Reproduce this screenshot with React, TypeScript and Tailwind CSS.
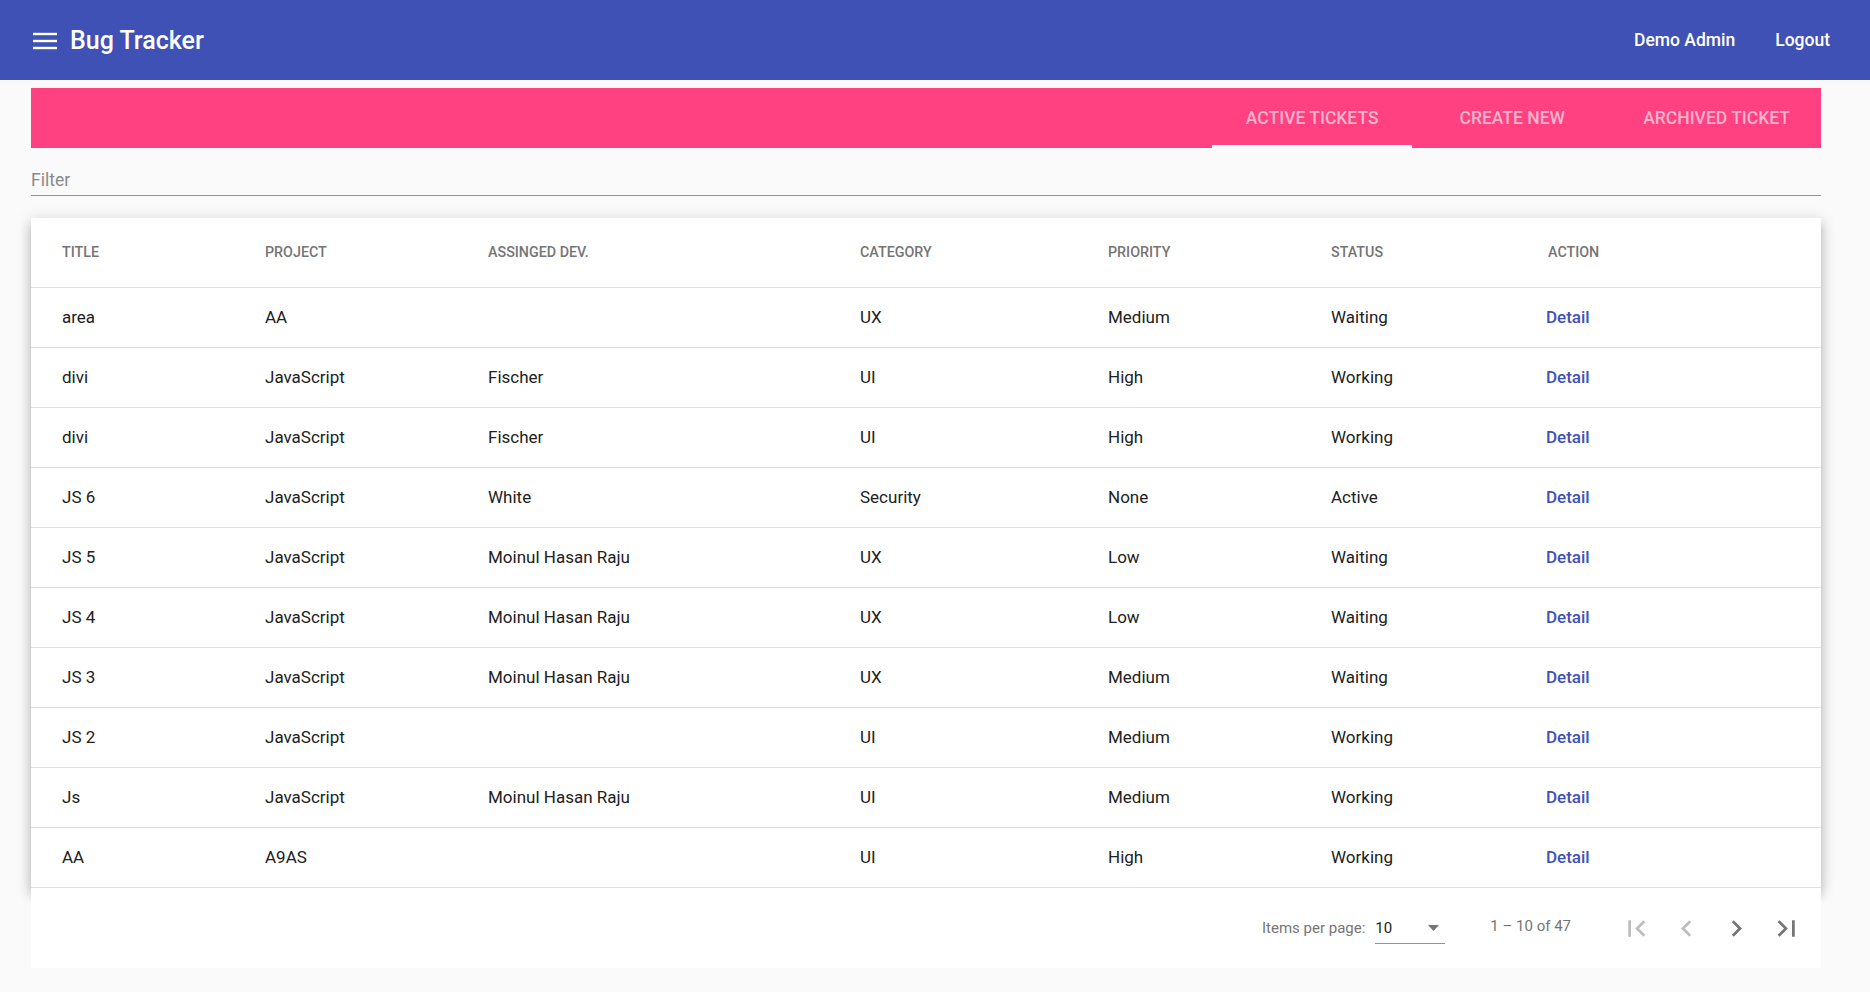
import React from "react";

type Row = {
  title: string;
  project: string;
  dev: string;
  category: string;
  priority: string;
  status: string;
};

const rows: Row[] = [
  { title: "area", project: "AA", dev: "", category: "UX", priority: "Medium", status: "Waiting" },
  { title: "divi", project: "JavaScript", dev: "Fischer", category: "UI", priority: "High", status: "Working" },
  { title: "divi", project: "JavaScript", dev: "Fischer", category: "UI", priority: "High", status: "Working" },
  { title: "JS 6", project: "JavaScript", dev: "White", category: "Security", priority: "None", status: "Active" },
  { title: "JS 5", project: "JavaScript", dev: "Moinul Hasan Raju", category: "UX", priority: "Low", status: "Waiting" },
  { title: "JS 4", project: "JavaScript", dev: "Moinul Hasan Raju", category: "UX", priority: "Low", status: "Waiting" },
  { title: "JS 3", project: "JavaScript", dev: "Moinul Hasan Raju", category: "UX", priority: "Medium", status: "Waiting" },
  { title: "JS 2", project: "JavaScript", dev: "", category: "UI", priority: "Medium", status: "Working" },
  { title: "Js", project: "JavaScript", dev: "Moinul Hasan Raju", category: "UI", priority: "Medium", status: "Working" },
  { title: "AA", project: "A9AS", dev: "", category: "UI", priority: "High", status: "Working" },
];

const gridCols = "grid grid-cols-[203px_223px_372px_248px_223px_217px_1fr] pl-[31px] items-center";

function PageIcon({ d, color }: { d: string; color: string }) {
  return (
    <button className="w-[50px] h-[48px] flex items-center justify-center">
      <svg width="33" height="33" viewBox="0 0 24 24" fill={color}>
        <path d={d} />
      </svg>
    </button>
  );
}

export default function App() {
  return (
    <div className="min-h-[992px] bg-[#fafafa] font-[Roboto,sans-serif]">
      {/* Top app bar */}
      <header className="h-[80px] bg-[#3f51b5] flex items-center pl-[33px] pr-[20px] text-white">
        <svg width="24" height="24" viewBox="0 0 24 24" className="mt-[2px]">
          <rect x="0" y="3.8" width="24" height="2.4" fill="white" />
          <rect x="0" y="10.8" width="24" height="2.4" fill="white" />
          <rect x="0" y="17.8" width="24" height="2.4" fill="white" />
        </svg>
        <span className="ml-[13px] text-[25px] font-medium leading-none">Bug Tracker</span>
        <div className="ml-auto flex items-center">
          <button className="px-[20px] h-[43px] text-[17.5px] font-medium">Demo Admin</button>
          <button className="px-[20px] h-[43px] text-[17.5px] font-medium">Logout</button>
        </div>
      </header>

      <main className="ml-[31px] w-[1790px] mt-[8px]">
        {/* Tabs */}
        <nav className="h-[60px] bg-[#ff4081] flex justify-end">
          {[
            { label: "Active Tickets", active: true },
            { label: "Create New", active: false },
            { label: "Archived Ticket", active: false },
          ].map((t) => (
            <div
              key={t.label}
              className="relative h-full min-w-[200px] px-[31px] flex items-center justify-center text-[17.5px] font-medium uppercase text-[#ffb3cd]"
            >
              {t.label}
              {t.active && <span className="absolute left-0 right-0 bottom-0 h-[3px] bg-white" />}
            </div>
          ))}
        </nav>

        {/* Filter */}
        <div className="pt-[22px] pb-[5px] border-b border-[#949494]">
          <div className="text-[17.5px] leading-[20px] text-[#8a8a8a]">Filter</div>
        </div>

        {/* Table */}
        <div className="mt-[22px]">
          <div className="bg-white shadow-[0_5px_5px_-3px_rgba(0,0,0,0.2),0_8px_10px_1px_rgba(0,0,0,0.14),0_3px_14px_2px_rgba(0,0,0,0.12)]">
            <div className={`${gridCols} h-[70px] border-b border-[#e0e0e0] text-[14.3px] font-medium text-[#757575] uppercase`}>
              <div>Title</div>
              <div>Project</div>
              <div>Assinged Dev.</div>
              <div>Category</div>
              <div>Priority</div>
              <div>Status</div>
              <div>Action</div>
            </div>
            {rows.map((r, i) => (
              <div key={i} className={`${gridCols} h-[60px] border-b border-[#e0e0e0] text-[17px] text-[#212121]`}>
                <div>{r.title}</div>
                <div>{r.project}</div>
                <div>{r.dev}</div>
                <div>{r.category}</div>
                <div>{r.priority}</div>
                <div>{r.status}</div>
                <div>
                  <a className="text-[#3f51b5] font-medium cursor-pointer -ml-[2px]">Detail</a>
                </div>
              </div>
            ))}
          </div>

          {/* Paginator */}
          <div className="relative z-10 bg-white h-[80px] flex items-center justify-end pr-[10px] text-[15px] text-[#757575]">
            <span>Items per page:</span>
            <div className="ml-[10px] w-[70px] h-[32px] pt-[1px] border-b border-[#949494] flex items-center justify-between pr-[6px]">
              <span className="text-[#212121]">10</span>
              <svg width="11" height="6" viewBox="0 0 11 6">
                <path d="M0 0 L11 0 L5.5 6 Z" fill="#757575" />
              </svg>
            </div>
            <span className="ml-[45px] mb-[3px]">1 – 10 of 47</span>
            <div className="ml-[40px] flex items-center">
              <PageIcon color="#bdbdbd" d="M18.41 16.59L13.82 12l4.59-4.59L17 6l-6 6 6 6zM6 6h2v12H6z" />
              <PageIcon color="#bdbdbd" d="M15.41 7.41L14 6l-6 6 6 6 1.41-1.41L10.83 12z" />
              <PageIcon color="#757575" d="M10 6L8.59 7.41 13.17 12l-4.58 4.59L10 18l6-6z" />
              <PageIcon color="#757575" d="M5.59 7.41L10.18 12l-4.59 4.59L7 18l6-6-6-6zM16 6h2v12h-2z" />
            </div>
          </div>
        </div>
      </main>
    </div>
  );
}
